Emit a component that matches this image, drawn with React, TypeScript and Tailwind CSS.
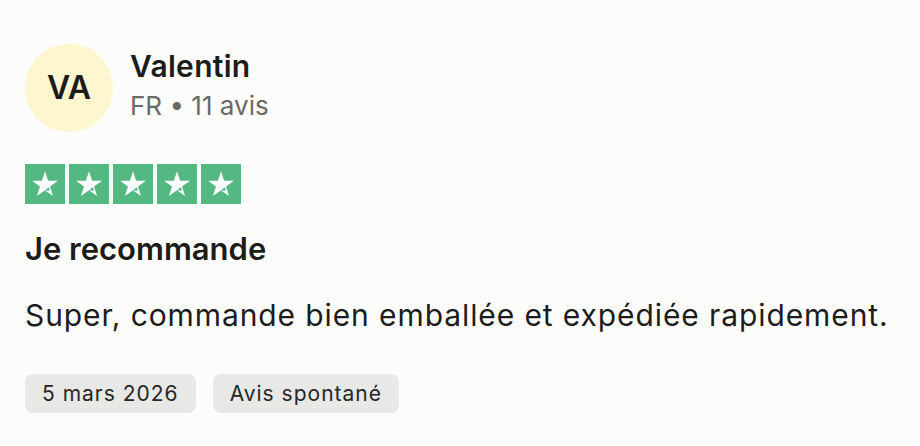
import React from "react";

const Star = () => (
  <div className="w-[40px] h-[40px] bg-[#54b883] flex items-center justify-center">
    <svg width="32" height="32" viewBox="0 0 24 24">
      <path d="M12 2.5l2.35 7.05h7.4l-6 4.35 2.3 7.1L12 16.6l-6.05 4.4 2.3-7.1-6-4.35h7.4z" fill="#fff" />
      <path d="M14.9 14.4l0.8 2.6L12 16.6z" fill="#54b883" />
    </svg>
  </div>
);

export default function App() {
  return (
    <div
      className="w-[920px] h-[446px] bg-[#fcfcfa] text-[#1c1c1c] pl-[25px] pt-[44px]"
      style={{ fontFamily: "Inter, 'Noto Sans', sans-serif" }}
    >
      <div className="flex items-center gap-[17px]">
        <div className="w-[88px] h-[88px] rounded-full bg-[#fdf6cf] flex items-center justify-center text-[32px] font-semibold">
          VA
        </div>
        <div className="flex flex-col -mt-[5px]">
          <div className="text-[30px] font-semibold leading-[36px] tracking-[0.3px]">Valentin</div>
          <div className="text-[26px] leading-[34px] text-[#6b6a66] mt-[5px]">FR • 11 avis</div>
        </div>
      </div>
      <div className="flex gap-[4px] mt-[32px]">
        <Star />
        <Star />
        <Star />
        <Star />
        <Star />
      </div>
      <div className="text-[31px] font-semibold mt-[26px] leading-[38px]">Je recommande</div>
      <div className="text-[30px] mt-[28px] leading-[38px] tracking-[0.9px]">
        Super, commande bien emballée et expédiée rapidement.
      </div>
      <div className="flex gap-[17px] mt-[40px]">
        <div className="h-[39px] px-[17px] rounded-[8px] bg-[#e8e8e6] text-[#262626] flex items-center text-[21px] tracking-[1px]">5 mars 2026</div>
        <div className="h-[39px] px-[17px] rounded-[8px] bg-[#e8e8e6] text-[#262626] flex items-center text-[21px] tracking-[1px]">Avis spontané</div>
      </div>
    </div>
  );
}
